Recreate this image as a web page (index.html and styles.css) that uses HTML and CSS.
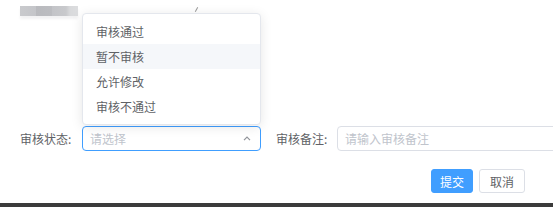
FILE: index.html
```html
<!DOCTYPE html>
<html>
<head>
    <meta charset="UTF-8">
    <title>审核</title>
    <link rel="stylesheet" href="styles.css">
</head>
<body>
    <div class="page">
        <div class="top">
            <div class="blur-text"></div>
            <span class="tick"></span>
        </div>
        <div class="form-row">
            <label class="form-label">审核状态:</label>
            <div class="select is-focus">
                <span class="placeholder">请选择</span>
                <svg class="arrow" width="8" height="5" viewBox="0 0 8 5">
                    <path d="M1 4.2 L4 1.2 L7 4.2" fill="none" stroke="#909399" stroke-width="1.2"/>
                </svg>
            </div>
            <label class="form-label label-remark">审核备注:</label>
            <div class="input">
                <span class="placeholder">请输入审核备注</span>
            </div>
        </div>
        <div class="actions">
            <button class="btn btn-primary">提交</button>
            <button class="btn">取消</button>
        </div>
        <div class="bottom-bar"></div>

        <ul class="dropdown">
            <li>审核通过</li>
            <li class="hover">暂不审核</li>
            <li>允许修改</li>
            <li>审核不通过</li>
        </ul>
    </div>
</body>
</html>
```

FILE: styles.css
```css
body {
    margin: 0;
    background: #fff;
    font-family: "Noto Sans CJK SC", "Noto Sans", sans-serif;
    font-size: 12px;
    color: #606266;
}
.page {
    position: relative;
    width: 553px;
    height: 207px;
    overflow: hidden;
}
.top {
    height: 16px;
    padding-top: 6px;
    box-sizing: border-box;
    position: relative;
}
.blur-text {
    margin-left: 20px;
    width: 58px;
    height: 10px;
    background: linear-gradient(90deg, #c9cacd 0, #c4c5c9 16px, #b9babe 16px, #bcbdc1 32px, #c3c4c8 32px, #c8c9cc 46px, #d8d9db 50px, #dcdddf 58px);
    box-shadow: 0 3px 3px #f2f2f3;
}
.tick {
    position: absolute;
    left: 196px;
    top: 7px;
    width: 1px;
    height: 5px;
    background: #9a9a9a;
    transform: rotate(30deg);
}
.form-row {
    display: flex;
    align-items: center;
    margin-top: 110px;
    height: 25px;
}
.form-label {
    flex-shrink: 0;
    width: 62px;
    padding-left: 20px;
    color: #606266;
    white-space: nowrap;
}
.label-remark {
    padding-left: 15px;
    width: 61px;
}
.select,
.input {
    height: 25px;
    box-sizing: border-box;
    border: 1px solid #dcdfe6;
    border-radius: 4px;
    display: flex;
    align-items: center;
    padding: 0 8px 0 7px;
    flex-shrink: 0;
}
.select {
    width: 179px;
    justify-content: space-between;
}
.select.is-focus {
    border-color: #409eff;
}
.input {
    width: 240px;
}
.placeholder {
    color: #c0c4cc;
}
.arrow {
    margin-right: 1px;
}
.actions {
    display: flex;
    justify-content: flex-end;
    gap: 6px;
    margin-top: 18px;
    padding-right: 28px;
}
.btn {
    height: 24px;
    padding: 0 10px;
    border: 1px solid #dcdfe6;
    border-radius: 3px;
    background: #fff;
    color: #606266;
    font-family: inherit;
    font-size: 12px;
}
.btn-primary {
    background: #409eff;
    border-color: #409eff;
    color: #fff;
    padding: 0 8px;
}
.bottom-bar {
    margin-top: 10px;
    height: 4px;
    background: #3b3b3b;
}
.dropdown {
    position: absolute;
    left: 82px;
    top: 13px;
    width: 179px;
    margin: 0;
    padding: 5px 0;
    list-style: none;
    box-sizing: border-box;
    background: #fff;
    border: 1px solid #e4e7ed;
    border-radius: 4px;
    box-shadow: 0 2px 12px rgba(0, 0, 0, 0.1);
}
.dropdown li {
    height: 25px;
    line-height: 25px;
    padding: 0 13px;
    color: #606266;
}
.dropdown li.hover {
    background: #f5f7fa;
}
```
